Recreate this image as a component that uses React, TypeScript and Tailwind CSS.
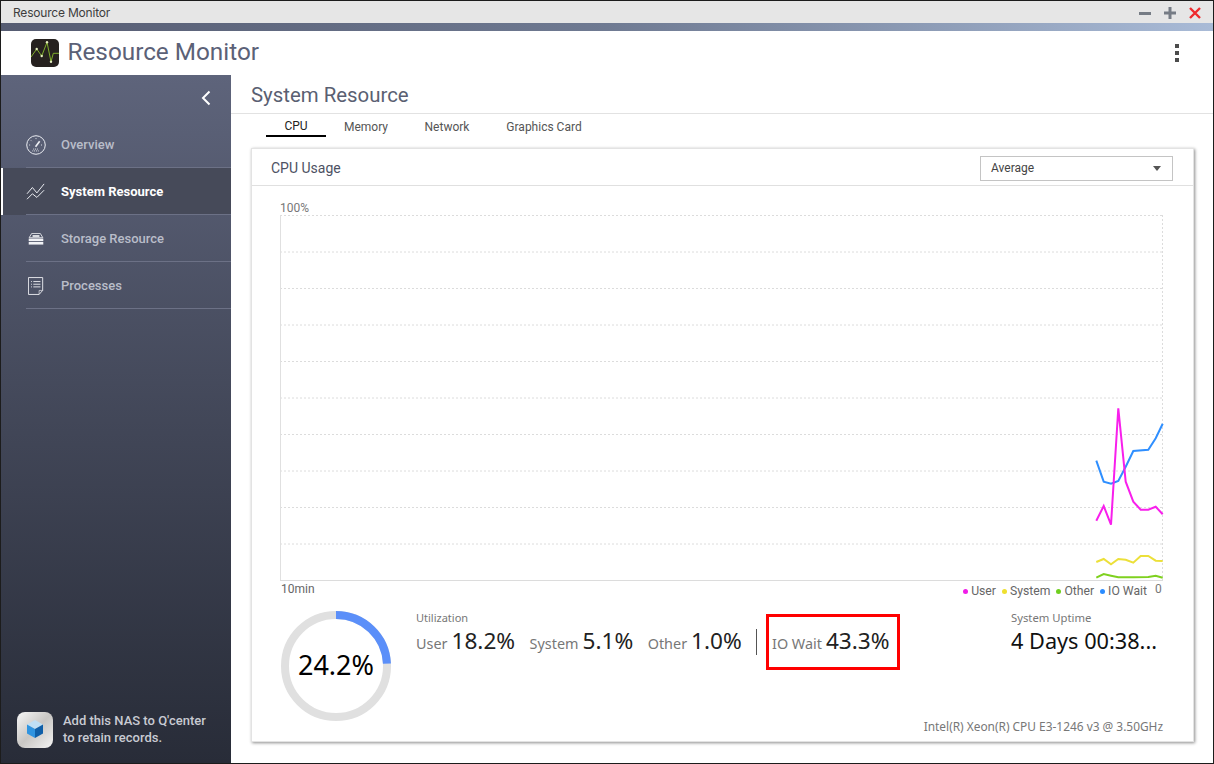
const font = "font-['Roboto',sans-serif]"

const nav = [
  { label: "Overview", icon: <GaugeIcon /> },
  { label: "System Resource", icon: <TrendIcon />, active: true },
  { label: "Storage Resource", icon: <StorageIcon /> },
  { label: "Processes", icon: <ListIcon /> },
]

const tabs = [
  { label: "CPU", w: "w-[60px]", active: true },
  { label: "Memory", w: "w-[80px]" },
  { label: "Network", w: "w-[82px]" },
  { label: "Graphics Card", w: "w-[112px]" },
]

const legend = [
  { label: "User", color: "bg-[#f01de8]" },
  { label: "System", color: "bg-[#efe02f]" },
  { label: "Other", color: "bg-[#6fcf1f]" },
  { label: "IO Wait", color: "bg-[#2b8cff]" },
]

const series = [
  { color: "#2f8fff", d: "816.3,245.7 823.7,266.7 831,268.7 838.3,266 845.7,251.7 853.3,236 868.3,234.7 875.7,223.3 882.7,208.7" },
  { color: "#f81fec", d: "816.3,305.7 823.7,291 831,309.7 838.3,193.3 845.7,266.7 853.3,286.7 860.7,294.7 868.3,294.7 875.7,291.7 882.7,299.3" },
  { color: "#ece03a", d: "816.3,347 823.7,344 831,349.3 838.3,344 845.7,344.7 853.3,347.7 860.7,341 868.3,341 875.7,345.7 882.7,346" },
  { color: "#7fd11f", d: "816.3,362.7 823.7,359 831,360.7 838.3,362.3 853.3,362.3 868.3,362 875.7,360.7 882.7,362.7" },
]

const gridY = [0.5, 37, 73.5, 110, 146.5, 183, 219.5, 256, 292.5, 329]

function GaugeIcon() {
  return (
    <svg width="20" height="20" viewBox="0 0 22 22" fill="none" stroke="#eceef3" strokeWidth="1.1">
      <circle cx="11" cy="11" r="10.2" />
      <path d="M10.5 13 15 7" strokeWidth="1.8" />
      <path d="M11 3.5v1.5M5.5 6l1 1M3.5 11H5M7 17.5h8M8 15.5h6M16.5 11H18" strokeDasharray="1 1" />
    </svg>
  )
}

function TrendIcon() {
  return (
    <svg width="20" height="18" viewBox="0 0 22 20" fill="none" stroke="#eceef3" strokeWidth="1.1">
      <path d="M1 12 7 5l5 6 8-10" />
      <path d="M1 18l6-6 5 4 8-8" />
    </svg>
  )
}

function StorageIcon() {
  return (
    <svg width="16" height="12" viewBox="0 0 18 14" fill="none">
      <path d="M4 .5h10l3 5H1z" stroke="#f0f1f5" />
      <rect x="5" y="2.5" width="8" height="2" fill="#f0f1f5" />
      <rect x="0.5" y="6.5" width="17" height="3" fill="#f0f1f5" />
      <rect x="0.5" y="10.5" width="17" height="3" fill="#f0f1f5" />
    </svg>
  )
}

function ListIcon() {
  return (
    <svg width="16" height="18" viewBox="0 0 18 20" fill="none" stroke="#f0f1f5">
      <path d="M.5.5h16v14.5l-4 4.5H.5z" />
      <path d="M12.5 19.5V15h4" strokeWidth="0.7" />
      <path d="M3.5 5h1M6 5h8M3.5 8h1M6 8h8M3.5 11h1M6 11h8" />
    </svg>
  )
}

function AppLogo() {
  return (
    <svg width="28" height="28" viewBox="0 0 28 28">
      <rect width="28" height="28" rx="5" fill="#26211f" />
      <polyline points="0,18 5.7,10 10.7,17 16,3.3 20,22.7 22.3,14.3 28,14.3" fill="none" stroke="#7fae2a" strokeWidth="1" />
      <circle cx="5.7" cy="10" r="1.2" fill="#e6f0c0" />
      <circle cx="10.7" cy="17" r="1.2" fill="#e6f0c0" />
      <circle cx="16" cy="3.3" r="1.2" fill="#e6f0c0" />
      <circle cx="20" cy="22.7" r="1.2" fill="#e6f0c0" />
    </svg>
  )
}

function QcenterLogo() {
  return (
    <svg width="36" height="36" viewBox="0 0 36 36">
      <defs>
        <linearGradient id="qbg" x1="0" y1="0" x2="1" y2="1">
          <stop offset="0" stopColor="#f7f7f7" />
          <stop offset="0.5" stopColor="#c9c7c4" />
          <stop offset="1" stopColor="#f4f4f4" />
        </linearGradient>
      </defs>
      <rect width="36" height="36" rx="8" fill="url(#qbg)" />
      <path d="M18 8l8 4.5-8 4.5-8-4.5z" fill="#bfdff5" />
      <path d="M10 12.5l8 4.5v9l-8-4.5z" fill="#2f94e0" />
      <path d="M26 12.5 18 17v9l8-4.5z" fill="#0f5fa8" />
    </svg>
  )
}

function Donut() {
  const r = 51
  const c = 2 * Math.PI * r
  return (
    <div className="relative w-[110px] h-[110px] shrink-0">
      <svg width="110" height="110" viewBox="0 0 110 110">
        <circle cx="55" cy="55" r={r} fill="none" stroke="#e0e0e0" strokeWidth="8" />
        <circle
          cx="55"
          cy="55"
          r={r}
          fill="none"
          stroke="#5b8ff9"
          strokeWidth="8"
          strokeDasharray={`${c * 0.242} ${c}`}
          transform="rotate(-90 55 55)"
        />
      </svg>
      <div className="absolute inset-0 flex items-center justify-center pb-[2px] text-[27px] text-black font-['Noto_Sans',sans-serif]">
        24.2%
      </div>
    </div>
  )
}

function Stat({ label, value, className }: { label: string; value: string; className?: string }) {
  return (
    <div className={`flex items-baseline gap-[4px] whitespace-nowrap ${className ?? ""}`}>
      <span className="text-[14.4px] text-[#777]">{label}</span>
      <span className="text-[22.6px] text-[#222]">{value}</span>
    </div>
  )
}

export default function App() {
  return (
    <div className={`w-[1214px] h-[764px] border border-[#1c1c1c] flex flex-col overflow-hidden bg-white ${font}`}>
      {/* window title bar */}
      <div className="h-[22px] shrink-0 bg-[#e6e6e6] flex items-center pl-3 pr-[12px] pt-[2px]">
        <span className="text-xs text-[#3d3d3d] flex-1 font-['Inter',sans-serif] tracking-[-0.2px]">Resource Monitor</span>
        <div className="flex items-center gap-[13px]">
          <div className="w-3 h-[3px] bg-[#767c85]" />
          <svg width="12" height="12" viewBox="0 0 12 12">
            <path d="M0 6h12M6 0v12" stroke="#767c85" strokeWidth="3" />
          </svg>
          <svg width="12" height="12" viewBox="0 0 12 12">
            <path d="M1 1l10 10M11 1 1 11" stroke="#ee2a2e" strokeWidth="2.4" />
          </svg>
        </div>
      </div>
      <div className="h-2 shrink-0 bg-gradient-to-r from-[#565c72] via-[#6f7a92] to-[#a9bbd7]" />

      {/* app header */}
      <div className="h-[44px] shrink-0 flex items-center pl-[30px] pr-[34px]">
        <AppLogo />
        <span className="ml-[8.5px] -mt-[2px] text-[24.3px] text-[#5b6177] flex-1">Resource Monitor</span>
        <div className="flex flex-col gap-[3px]">
          <div className="w-1 h-1 bg-[#4c4c4c]" />
          <div className="w-1 h-1 bg-[#4c4c4c]" />
          <div className="w-1 h-1 bg-[#4c4c4c]" />
        </div>
      </div>

      <div className="flex-1 flex min-h-0">
        {/* sidebar */}
        <aside className="w-[230px] shrink-0 flex flex-col bg-gradient-to-b from-[#5e647b] to-[#282c38]">
          <div className="h-[46px] flex items-center justify-end pr-[20px]">
            <svg width="10" height="16" viewBox="0 0 10 16" fill="none">
              <path d="M8.5 1.5 2 8l6.5 6.5" stroke="#fff" strokeWidth="2" />
            </svg>
          </div>
          {nav.map((item) => (
            <div
              key={item.label}
              className={`h-[47px] flex items-center relative ${item.active ? "bg-[#464a59]" : ""}`}
            >
              {item.active && <div className="absolute left-0 top-0 bottom-0 w-[2px] bg-white" />}
              <div className="w-[60px] pl-[25px] shrink-0 flex justify-start">
                <div className="w-[20px] flex justify-center">{item.icon}</div>
              </div>
              <span className={`text-[13px] ${item.active ? "font-bold text-white" : "font-medium text-[#b9bdc9]"}`}>
                {item.label}
              </span>
              <div className="absolute left-[25px] right-0 bottom-0 h-px bg-[#6c7186]" />
            </div>
          ))}
          <div className="mt-auto mb-[15px] ml-4 flex items-center gap-[10px]">
            <QcenterLogo />
            <p className="-mt-[2px] text-[13px] leading-[17px] font-medium text-[#c8cad2]">
              Add this NAS to Q'center
              <br />
              to retain records.
            </p>
          </div>
        </aside>

        {/* content */}
        <main className="flex-1 min-w-0 flex flex-col">
          <div className="h-[39px] shrink-0 border-b border-[#e2e2e2] pl-5 pt-[7px] text-[20.4px] leading-[26px] text-[#5a5f72]">
            System Resource
          </div>
          <div className="h-[23px] shrink-0 flex pl-[35px] text-xs">
            {tabs.map((t) => (
              <div
                key={t.label}
                className={`${t.w} h-[23px] flex items-center justify-center pt-[3px] ${
                  t.active ? "border-b-2 border-black text-[#222]" : "text-[#555]"
                }`}
              >
                {t.label}
              </div>
            ))}
          </div>

          {/* CPU usage card */}
          <section className="mt-[11px] ml-5 w-[943px] h-[594px] flex flex-col border border-[#e3e3e3] bg-white shadow-[1px_1px_3px_rgba(0,0,0,0.45)]">
            <div className="h-[37px] shrink-0 border-b border-[#e0e0e0] flex items-center pl-[19px] pr-[20px]">
              <span className="flex-1 text-sm text-[#4d5163] pt-[2px]">CPU Usage</span>
              <div className="w-[193px] h-[25px] mt-[2px] border border-[#c4c4c4] flex items-center pl-[10px] pr-[11px] text-xs text-[#444]">
                <span className="flex-1">Average</span>
                <div className="w-0 h-0 border-x-[4px] border-x-transparent border-t-[5px] border-t-[#555]" />
              </div>
            </div>

            <div className="flex-1 pl-[28px] pr-[30px] flex flex-col min-h-0">
              <div className="h-[29px] shrink-0 flex items-end text-xs leading-[14px] text-[#777]">100%</div>
              <svg width="884" height="367" viewBox="0 0 884 367" className="shrink-0 block" fill="none">
                {gridY.map((y) => (
                  <line key={y} x1="0" x2="883" y1={y} y2={y} stroke="#dcdcdc" strokeDasharray="2 2" />
                ))}
                <line x1="0.5" x2="0.5" y1="0" y2="366" stroke="#e0e0e0" />
                <line x1="882.5" x2="882.5" y1="0" y2="366" stroke="#dcdcdc" strokeDasharray="2 2" />
                <line x1="0" x2="883" y1="365.5" y2="365.5" stroke="#dcdcdc" />
                {series.map((s) => (
                  <polyline key={s.color} points={s.d} stroke={s.color} strokeWidth="2" />
                ))}
              </svg>
              <div className="h-[19px] shrink-0 flex items-start text-xs text-[#666]">
                <span className="flex-1 -mt-[1px] pl-px leading-[16px]">10min</span>
                <div className="flex items-center gap-[6px] mt-[1px] text-[12.2px] leading-[16px]">
                  {legend.map((l) => (
                    <span key={l.label} className="flex items-center gap-[3px]">
                      <span className={`w-[5px] h-[5px] rounded-full ${l.color}`} />
                      {l.label}
                    </span>
                  ))}
                </div>
                <span className="w-[8px] ml-[8px] -mt-[1px] text-[#777] leading-[16px]">0</span>
              </div>

              <div className="flex flex-1 pl-px pt-[10px] font-['Noto_Sans',sans-serif]">
                <Donut />
                <div className="ml-[25px] w-[350px] shrink-0">
                  <div className="text-[11px] leading-[16px] text-[#777] mt-[-1px]">Utilization</div>
                  <div className="flex items-center gap-[14.5px] h-[30px]">
                    <Stat label="User" value="18.2%" />
                    <Stat label="System" value="5.1%" />
                    <Stat label="Other" value="1.0%" />
                    <div className="h-[26px] w-px bg-[#555] mt-[2px]" />
                  </div>
                </div>
                <div className="mt-[3px] w-[134px] h-[56px] shrink-0 border-[3px] border-[#ff0000] flex items-center pl-[3px] pb-[3px]">
                  <Stat label="IO Wait" value="43.3%" />
                </div>
                <div className="ml-[111px] flex-1 flex flex-col relative">
                  <div className="text-[11.3px] leading-[16px] text-[#777] mt-[-1px]">System Uptime</div>
                  <div className="text-[21.7px] leading-[32px] -mt-[1px] text-[#111] whitespace-nowrap">4 Days 00:38...</div>
                  <div className="absolute right-0 top-[107px] text-[11.9px] leading-[16px] text-[#777] whitespace-nowrap">
                    Intel(R) Xeon(R) CPU E3-1246 v3 @ 3.50GHz
                  </div>
                </div>
              </div>
            </div>
          </section>
        </main>
      </div>
    </div>
  )
}
